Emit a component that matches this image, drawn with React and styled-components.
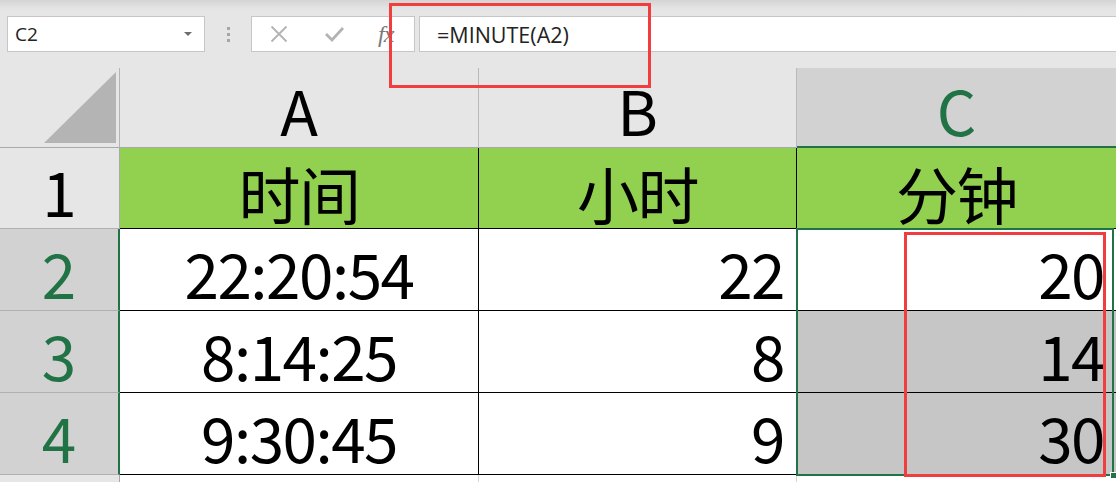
import React from "react";
import styled, { createGlobalStyle } from "styled-components";

const Global = createGlobalStyle`
  html, body { margin: 0; padding: 0; background: #e6e6e6; }
  body { width: 1116px; height: 482px; overflow: hidden; }
`;

const GREEN = "#217346";
const RED = "#f03e3e";
const CELL_FONT = `"Noto Sans CJK SC", "Noto Sans", sans-serif`;
const UI_FONT = `"Open Sans", "Noto Sans", sans-serif`;

const Page = styled.div`
  position: relative;
  width: 1116px;
  height: 482px;
  overflow: hidden;
  background: #e6e6e6;
`;

const Toolbar = styled.div`
  height: 68px;
  box-sizing: border-box;
  padding: 16px 0 16px 7px;
  display: flex;
  align-items: stretch;
  background: linear-gradient(#d4d4d4 0px, #e3e3e3 8px, #e6e6e6 12px);
`;

const NameBox = styled.div`
  width: 198px;
  box-sizing: border-box;
  background: #fff;
  border: 1px solid #c6c6c6;
  display: flex;
  align-items: center;
  justify-content: space-between;
  padding: 0 12px 0 7px;
  font-family: ${UI_FONT};
  font-size: 19px;
  color: #222;
`;

const Caret = styled.span`
  width: 0;
  height: 0;
  border-left: 4px solid transparent;
  border-right: 4px solid transparent;
  border-top: 4px solid #6d6d6d;
`;

const Grip = styled.div`
  width: 46px;
  display: flex;
  flex-direction: column;
  align-items: center;
  justify-content: center;
  gap: 3px;
`;

const Dot = styled.span`
  width: 3px;
  height: 3px;
  background: #a6a6a6;
`;

const ButtonBox = styled.div`
  width: 164px;
  box-sizing: border-box;
  background: #fff;
  border: 1px solid #c6c6c6;
  display: flex;
  align-items: center;
  padding-left: 18px;
`;

const IconSlot = styled.span`
  display: flex;
  margin-right: ${(p) => p.$gap || "0"};
`;

const FxText = styled.span`
  font-family: "Liberation Serif", serif;
  font-style: italic;
  font-size: 24px;
  color: #7a7a7a;
  letter-spacing: -1px;
  line-height: 1;
`;

const FormulaInput = styled.div`
  flex: 1;
  margin-left: 4px;
  box-sizing: border-box;
  background: #fff;
  border: 1px solid #c6c6c6;
  border-right: none;
  display: flex;
  align-items: center;
  padding-left: 17px;
  font-family: ${UI_FONT};
  font-size: 21.5px;
  color: #222;
`;

const Grid = styled.div`
  display: grid;
  grid-template-columns: 120px 359px 318px 320px;
  grid-template-rows: 80px 81px 82px 82px 82px 40px;
`;

const Corner = styled.div`
  box-sizing: border-box;
  border-right: 1px solid #b4b4b4;
  border-bottom: 1px solid #a8a8a8;
  display: flex;
  align-items: flex-end;
  justify-content: flex-end;
  padding: 0 3px 4px 0;
`;

const ColHead = styled.div`
  box-sizing: border-box;
  background: ${(p) => (p.$sel ? "#d2d2d2" : "#e6e6e6")};
  border-right: 1px solid #b9b9b9;
  border-bottom: ${(p) => (p.$sel ? `2px solid ${GREEN}` : "1px solid #a8a8a8")};
  color: ${(p) => (p.$sel ? GREEN : "#000")};
  font-family: ${CELL_FONT};
  font-size: 62px;
  line-height: 1;
  display: flex;
  align-items: flex-end;
  justify-content: center;
  padding-bottom: ${(p) => (p.$sel ? "6px" : "7px")};
`;

const RowHead = styled.div`
  box-sizing: border-box;
  background: ${(p) => (p.$sel ? "#d2d2d2" : "#e6e6e6")};
  border-right: ${(p) => (p.$sel ? `2px solid ${GREEN}` : "1px solid #a8a8a8")};
  border-bottom: 1px solid #b0b0b0;
  color: ${(p) => (p.$sel ? GREEN : "#000")};
  font-family: ${CELL_FONT};
  font-size: 62px;
  line-height: 1;
  display: flex;
  align-items: flex-end;
  justify-content: center;
  padding-bottom: 7px;
`;

const Cell = styled.div`
  box-sizing: border-box;
  background: ${(p) => p.$bg || "#fff"};
  border-right: 1px solid ${(p) => p.$line || "#000"};
  border-bottom: 1px solid ${(p) => p.$line || "#000"};
  color: #000;
  font-family: ${CELL_FONT};
  font-size: 62px;
  letter-spacing: -1.5px;
  line-height: 1;
  display: flex;
  align-items: flex-end;
  justify-content: ${(p) => (p.$right ? "flex-end" : "center")};
  padding: 0 12px ${(p) => (p.$cjk ? "4px" : "7px")} 0;
  padding-left: ${(p) => (p.$right ? "0" : "12px")};
  white-space: nowrap;
`;

const Overlay = styled.div`
  position: absolute;
  box-sizing: border-box;
  pointer-events: none;
`;

const Selection = styled(Overlay)`
  left: 796px;
  top: 228px;
  width: 318px;
  height: 248px;
  border: 2px solid ${GREEN};
`;

const Handle = styled(Overlay)`
  left: 1110px;
  top: 472px;
  width: 7px;
  height: 7px;
  background: ${GREEN};
  border: 1px solid #fff;
`;

const RedBox = styled(Overlay)`
  border: 3px solid ${RED};
`;

const XIcon = () => (
  <svg width="18" height="18" viewBox="0 0 18 18">
    <path d="M1.5 1.5 L16.5 16.5 M16.5 1.5 L1.5 16.5" stroke="#b3b3b3" strokeWidth="1.8" fill="none" />
  </svg>
);

const CheckIcon = () => (
  <svg width="21" height="18" viewBox="0 0 21 18">
    <path d="M2 9 L8 15 L19 3" stroke="#b3b3b3" strokeWidth="2.8" fill="none" />
  </svg>
);

const CornerTriangle = () => (
  <svg width="72" height="71" viewBox="0 0 72 71">
    <polygon points="72,0 72,71 0,71" fill="#b4b4b4" />
  </svg>
);

const rows = [
  { n: "2", a: "22:20:54", b: "22", c: "20", cBg: "#fff" },
  { n: "3", a: "8:14:25", b: "8", c: "14", cBg: "#c6c6c6" },
  { n: "4", a: "9:30:45", b: "9", c: "30", cBg: "#c6c6c6" },
];

export default function App() {
  return (
    <Page>
      <Global />
      <Toolbar>
        <NameBox>
          <span>C2</span>
          <Caret />
        </NameBox>
        <Grip>
          <Dot />
          <Dot />
          <Dot />
        </Grip>
        <ButtonBox>
          <IconSlot $gap="36px">
            <XIcon />
          </IconSlot>
          <IconSlot $gap="33px">
            <CheckIcon />
          </IconSlot>
          <FxText>fx</FxText>
        </ButtonBox>
        <FormulaInput>=MINUTE(A2)</FormulaInput>
      </Toolbar>
      <Grid>
        <Corner>
          <CornerTriangle />
        </Corner>
        <ColHead>A</ColHead>
        <ColHead>B</ColHead>
        <ColHead $sel>C</ColHead>

        <RowHead>1</RowHead>
        <Cell $cjk $bg="#92d050">时间</Cell>
        <Cell $cjk $bg="#92d050">小时</Cell>
        <Cell $cjk $bg="#92d050">分钟</Cell>

        {rows.map((r) => (
          <React.Fragment key={r.n}>
            <RowHead $sel>{r.n}</RowHead>
            <Cell>{r.a}</Cell>
            <Cell $right>{r.b}</Cell>
            <Cell $right $bg={r.cBg}>{r.c}</Cell>
          </React.Fragment>
        ))}

        <RowHead />
        <Cell $line="#d4d4d4" />
        <Cell $line="#d4d4d4" />
        <Cell $line="#d4d4d4" />
      </Grid>
      <Selection />
      <Handle />
      <RedBox style={{ left: 389, top: 3, width: 262, height: 85 }} />
      <RedBox style={{ left: 904, top: 232, width: 202, height: 245 }} />
    </Page>
  );
}
